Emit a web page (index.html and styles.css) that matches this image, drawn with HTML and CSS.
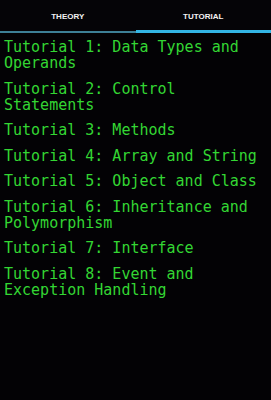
FILE: index.html
```html
<!DOCTYPE html>
<html>
<head>
<meta charset="utf-8">
<link rel="stylesheet" href="styles.css">
</head>
<body>
<div class="tabs">
  <div class="tab">THEORY</div>
  <div class="tab active">TUTORIAL</div>
</div>
<ul class="list">
  <li>Tutorial 1: Data Types and Operands</li>
  <li>Tutorial 2: Control Statements</li>
  <li>Tutorial 3: Methods</li>
  <li>Tutorial 4: Array and String</li>
  <li>Tutorial 5: Object and Class</li>
  <li>Tutorial 6: Inheritance and Polymorphism</li>
  <li>Tutorial 7: Interface</li>
  <li>Tutorial 8: Event and Exception Handling</li>
</ul>
</body>
</html>
```
FILE: styles.css
```css
html, body {
  margin: 0;
  padding: 0;
  background: #030205;
  height: 100%;
}
.tabs {
  display: flex;
  height: 33px;
  background: #050407;
}
.tab {
  flex: 1;
  display: flex;
  align-items: center;
  justify-content: center;
  font-family: "Liberation Sans", Arial, sans-serif;
  font-weight: bold;
  font-size: 8px;
  color: #f2f2f2;
  box-sizing: border-box;
  border-bottom: 2px solid #3d7f96;
  padding-top: 1px;
}
.tab.active {
  border-bottom: 3px solid #33b5e5;
  padding-top: 2px;
}
.list {
  list-style: none;
  margin: 0;
  padding: 6px 4px 0 4px;
  font-family: "DejaVu Sans Mono", monospace;
  font-size: 15px;
  line-height: 16px;
  color: #33d633;
}
.list li {
  padding-bottom: 9.5px;
}
```
